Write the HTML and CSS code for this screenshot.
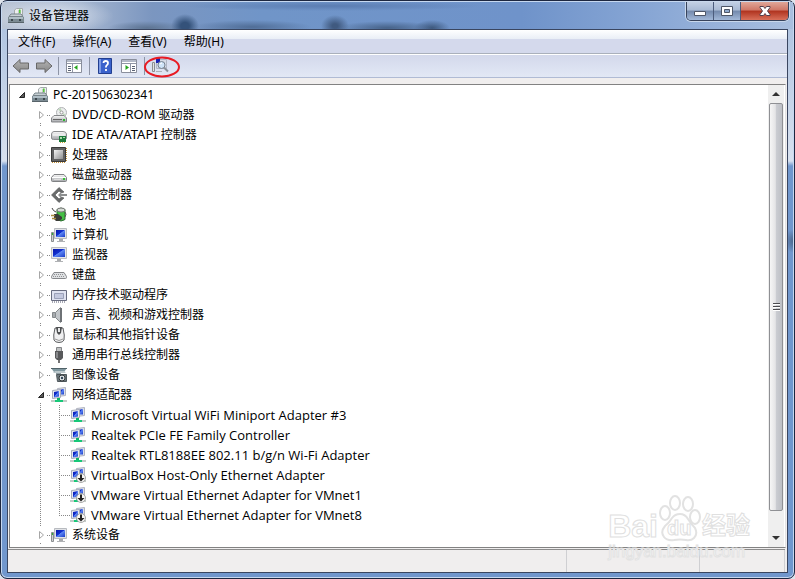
FILE: index.html
```
<!DOCTYPE html>
<html lang="zh-CN">
<head>
  <meta charset="UTF-8">
  <title>设备管理器</title>
  <link rel="stylesheet" href="styles.css">
</head>
<body>
<svg class="defs" aria-hidden="true">
  <defs>
    <linearGradient id="blue" x1="0" y1="0" x2="1" y2="1">
      <stop offset="0" stop-color="#0818a8"/><stop offset=".45" stop-color="#1230d0"/><stop offset=".5" stop-color="#5d86f4"/><stop offset="1" stop-color="#1a3cc8"/>
    </linearGradient>
    <linearGradient id="metal" x1="0" y1="0" x2="0" y2="1">
      <stop offset="0" stop-color="#fafafa"/><stop offset="1" stop-color="#a4a6aa"/>
    </linearGradient>
    <linearGradient id="arrow" x1="0" y1="0" x2="0" y2="1">
      <stop offset="0" stop-color="#b4b4b4"/><stop offset="1" stop-color="#868686"/>
    </linearGradient>
    <linearGradient id="chip" x1="0" y1="0" x2="1" y2="1">
      <stop offset="0" stop-color="#f4f4f4"/><stop offset="1" stop-color="#8e8f90"/>
    </linearGradient>
  </defs>
  <symbol id="i-pc" viewBox="0 0 16 16">
    <path d="M6.500 8V2l2-1.500h6V8z" fill="#eceeee" stroke="#a4aaac"/>
    <path d="M10 2h3v5h-3z" fill="#c2ccc4"/><path d="M11 1.500h1.500V5H11z" fill="#52cc38"/>
    <path d="M1 8.500l2-2.500h10l2 2.500z" fill="#c7d0d4" stroke="#78848a"/>
    <path d="M0 9h16v6H0z" fill="#7c8b93"/><path d="M1 9h14v2H1z" fill="#b0bec6"/>
    <path d="M3 11h2v2H3zM11 11h2v2h-2z" fill="#3c474d"/><path d="M0 14.500h16" stroke="#58646a"/>
  </symbol>
  <symbol id="i-dvd" viewBox="0 0 16 16">
    <circle cx="10.500" cy="5.500" r="5" fill="#eceeee" stroke="#b0b2b4"/>
    <path d="M10.500 5.500L7 2.500l3-1.500zM10.500 5.500l4 2-1 2z" fill="#bcd8b8"/>
    <circle cx="10.500" cy="5.500" r="1.500" fill="#fff" stroke="#999"/>
    <path d="M.500 11L3 8.500h10l2.500 2.500v4H.500z" fill="url(#metal)" stroke="#85878a"/>
    <path d="M2 12.500h9" stroke="#666"/><path d="M12 12h2v2h-2z" fill="#2db82d"/>
  </symbol>
  <symbol id="i-ide" viewBox="0 0 16 16">
    <path d="M.500 7Q1 4.500 3 4.500h9q3 0 3.500 2.500v4q0 1.500-2 1.500H2.500q-2 0-2-1.500z" fill="url(#metal)" stroke="#8a8c8e"/>
    <path d="M2 8h12" stroke="#fff"/>
    <path d="M8 9h7v6H8z" fill="#1d7a3c"/><path d="M9 10h2v2H9zM12 10h2v1h-2z" fill="#a8dca8"/>
    <path d="M9 15.500h6" stroke="#c8a43c" stroke-dasharray="1 1"/>
  </symbol>
  <symbol id="i-cpu" viewBox="0 0 16 16">
    <path d="M1 15.500h14M15.500 1v14" stroke="#c09038" stroke-dasharray="1 1"/>
    <path d="M.500.500h14v14H.500z" fill="#606162" stroke="#3a3a3a"/>
    <path d="M3 3h9v9H3z" fill="url(#chip)"/>
  </symbol>
  <symbol id="i-disk" viewBox="0 0 16 16">
    <path d="M.500 10.500L3 7.500h10l2.500 3v3q0 1-1 1h-13q-1 0-1-1z" fill="url(#metal)" stroke="#808284"/>
    <path d="M1 10.500h14" stroke="#fff"/><path d="M3 12.500h7" stroke="#ddd"/><path d="M12 11h2v2h-2z" fill="#35c035"/>
  </symbol>
  <symbol id="i-storage" viewBox="0 0 16 16">
    <path d="M8 .500l5 4.500-2.500 1L8 4 4 8l4 4 2.500-2 2.500 1-5 4.500L.500 8z" fill="#6a6c6d" stroke="#4e5051" stroke-width=".6"/>
    <path d="M7 8l3-3v2h6v2h-6v2z" fill="#8d8f90"/>
  </symbol>
  <symbol id="i-battery" viewBox="0 0 16 16">
    <path d="M6 2.500q4-3 8 0v10q-4 3-8 0z" fill="#44c044" stroke="#2c6a30"/>
    <ellipse cx="10" cy="3" rx="4" ry="2" fill="#d6dcd6" stroke="#777"/>
    <path d="M14 5q2 2 0 5" fill="none" stroke="#555"/>
    <path d="M3 7h4l4 3v2l-3 2H5L3 12z" fill="#3b3c38"/>
    <path d="M0 8.500h4M1 11.500h4" stroke="#a98a42" stroke-width="1.400"/>
    <path d="M1 1q1 3 4 4" fill="none" stroke="#444"/>
  </symbol>
  <symbol id="i-monitor" viewBox="0 0 16 16">
    <path d="M.500.500h15v11H.500z" fill="#e4e6ea" stroke="#bcbec2"/>
    <path d="M2 2h12v8H2z" fill="url(#blue)"/>
    <path d="M6 12h4v2H6z" fill="#a8aaad"/><path d="M4 14.500h8" stroke="#b0b2b5"/>
  </symbol>
  <symbol id="i-computer" viewBox="0 0 16 16">
    <path d="M.500 5.500h2v9h-2z" fill="#d0d2d4" stroke="#8b8e90"/><path d="M1 6h1v2H1z" fill="#2fb22f"/>
    <path d="M3.500 1.500h12v10h-12z" fill="#e0e2e6" stroke="#b8bbc0"/>
    <path d="M5 3h9v7H5z" fill="url(#blue)"/>
    <path d="M8 12h4v2H8z" fill="#a8aaad"/><path d="M6 14.500h8" stroke="#b0b2b5"/>
  </symbol>
  <symbol id="i-keyboard" viewBox="0 0 16 16">
    <path d="M.500 9.500L3 5.500h10l2.500 4v1q0 1-1 1h-13q-1 0-1-1z" fill="#dfe1e3" stroke="#85878a"/>
    <path d="M3 7.500h10M2 9.500h12" stroke="#909295" stroke-dasharray="1 1"/>
  </symbol>
  <symbol id="i-memory" viewBox="0 0 16 16">
    <path d="M.500 3.500h15v10H.500z" fill="#dfe2f0" stroke="#686c80"/>
    <path d="M3.500 6.500h9v5h-9z" fill="#c3c8de" stroke="#9aa0b8"/>
    <path d="M1 15h14" stroke="#50556c" stroke-dasharray="1 1"/>
  </symbol>
  <symbol id="i-sound" viewBox="0 0 16 16">
    <path d="M1.500 5.500h3v5h-3z" fill="#a6aaae" stroke="#85898c"/>
    <path d="M4.500 5.500L9.500.500v15l-5-5z" fill="#c2c6ca" stroke="#85898c"/><path d="M10 1v14" stroke="#6e7276" stroke-width="2"/>
  </symbol>
  <symbol id="i-mouse" viewBox="0 0 16 16">
    <path d="M4 1q-2 8-1 12 1 2.500 5 2.500t5-2.500q1-4-1-12z" fill="#f0f0f1" stroke="#5c5e60"/>
    <path d="M5 0h6l-1 6-2 2-2-2z" fill="#4d4f51"/><path d="M7 1h2v4H7z" fill="#e8e9ea"/>
    <path d="M4 12q4 3 8 0" fill="none" stroke="#999"/>
  </symbol>
  <symbol id="i-usb" viewBox="0 0 16 16">
    <path d="M5.500.500h5v5h-5z" fill="#c0c2c3" stroke="#838587"/>
    <path d="M4 4h8v7l-2 2H6l-2-2z" fill="#58595b"/><path d="M5 5h2v6H5z" fill="#88898c"/><path d="M8 13v3" stroke="#444" stroke-width="1.500"/>
  </symbol>
  <symbol id="i-imaging" viewBox="0 0 16 16">
    <path d="M0 1h16l-3 4H3z" fill="#8098a0"/><path d="M0 1.500h16" stroke="#506268"/><path d="M4 4h9l2 2H2z" fill="#bcc8cc"/>
    <path d="M5.500 7.500h10v7h-9z" fill="#6b767b" stroke="#4f585c"/>
    <circle cx="11" cy="11" r="3" fill="#e0e6e8" stroke="#35393b"/><circle cx="11" cy="11" r="1.200" fill="#345"/><path d="M5 6.500h5" stroke="#8d9ba0"/>
  </symbol>
  <symbol id="i-net" viewBox="0 0 16 16">
    <path d="M6.500 1.500l8-1v8l-8 1z" fill="#dde0ea" stroke="#b0b4c0"/><path d="M8 3l5-1v5.500H8z" fill="url(#blue)"/>
    <path d="M1.500 3.500l8-1v8l-8 1z" fill="#e6e8f0" stroke="#a6abb8"/><path d="M3 5l5-1v5.500l-5 1z" fill="url(#blue)"/>
    <path d="M6 11h3v3H6z" fill="#0fb468"/><path d="M0 14h16" stroke="#c4ccc8" stroke-width="2"/><path d="M4 14h8" stroke="#17c878" stroke-width="2"/>
  </symbol>
  <symbol id="i-netoff" viewBox="0 0 16 16">
    <use href="#i-net"/>
    <circle cx="11" cy="11" r="4.500" fill="#f4f4f4" stroke="#a9a9a9"/>
    <path d="M10 7.500h2V11h2.500L11 14.500 7.500 11H10z" fill="#242424"/>
  </symbol>
  <symbol id="i-open" viewBox="0 0 8 8"><path d="M6.500 1.500v5h-5z" fill="#595959" stroke="#262626"/></symbol>
  <symbol id="i-closed" viewBox="0 0 8 8"><path d="M2.500.500v7l4-3.500z" fill="#fff" stroke="#a6a6a6"/></symbol>
</svg>

<div class="window">
  <header class="titlebar">
    <svg class="icon"><use href="#i-pc"/></svg>
    <h1>设备管理器</h1>
    <div class="caption">
      <button aria-label="最小化"><svg width="14" height="14"><path d="M1.500 7.500h11v4h-11z" fill="#fff" stroke="#4e5667"/></svg></button>
      <button aria-label="最大化"><svg width="14" height="14"><path d="M1.500 2.500h11v9h-11z" fill="#fff" stroke="#4e5667"/><path d="M4.500 5.500h5v3h-5z" fill="#8fa9cd" stroke="#4e5667"/></svg></button>
      <button class="close" aria-label="关闭"><svg width="14" height="14"><path d="M2 2.500h3.500L7 4.500l1.500-2H12v1L9.500 7l2.500 3.500v1H8.500L7 9.500l-1.500 2H2v-1L4.500 7 2 3.500z" fill="#fff" stroke="#53404e"/></svg></button>
    </div>
  </header>

  <main class="client">
    <nav class="menu">
      <button>文件(F)</button>
      <button>操作(A)</button>
      <button>查看(V)</button>
      <button>帮助(H)</button>
    </nav>

    <div class="toolbar">
      <button aria-label="后退"><svg width="18" height="16"><path d="M1 8l7-6.500V5h8.500v6H8v3.500z" fill="url(#arrow)" stroke="#686868"/></svg></button>
      <button aria-label="前进"><svg width="18" height="16"><path d="M17 8l-7-6.500V5H1.500v6H10v3.500z" fill="url(#arrow)" stroke="#686868"/></svg></button>
      <span class="sep"></span>
      <button class="wide" aria-label="显示/隐藏控制台树"><svg width="16" height="14"><path d="M.500.500h15v13H.500z" fill="#fff" stroke="#8a8f9c"/><path d="M1 1h14v2H1z" fill="#b4bac8"/><path d="M1 4.500h14M6.500 5v8" stroke="#9096a6"/><path d="M2 7.500h3M2 9.500h3M2 11.500h3" stroke="#5a6274"/><path d="M11.500 6v5L8 8.500z" fill="#26a51e"/></svg></button>
      <span class="sep"></span>
      <button class="wide" aria-label="帮助"><svg width="14" height="16"><path d="M.500.500h13v15H.500z" fill="#3a62cc" stroke="#223f90"/><path d="M1 1h2v14H1z" fill="#7d9be6"/><path d="M5.500 5Q5.500 3 7.700 3T10 5q0 1.500-1.200 2.200-.9.600-.9 2.300M8 11v2" fill="none" stroke="#fff" stroke-width="1.800"/></svg></button>
      <button class="wide" aria-label="操作窗格"><svg width="16" height="14"><path d="M.500.500h15v13H.500z" fill="#fff" stroke="#8a8f9c"/><path d="M1 1h14v2H1z" fill="#b4bac8"/><path d="M1 4.500h14M9.500 5v8" stroke="#9096a6"/><path d="M11 7.500h3M11 9.500h3M11 11.500h3" stroke="#5a6274"/><path d="M4.500 6v5L8 8.500z" fill="#26a51e"/></svg></button>
      <span class="sep"></span>
      <button class="scan" aria-label="扫描检测硬件改动">
        <svg width="18" height="16"><path d="M1.500 4.500h2v9h-2z" fill="#e4e4e4" stroke="#8b8e90"/><path d="M5.500 1.500h10v9h-10z" fill="#d5dae6" stroke="#b0b6c4"/><path d="M5 0h4v5H5z" fill="#1722b4"/><circle cx="10.500" cy="7" r="3.500" fill="#cfe4f8" stroke="#77818f"/><path d="M9 6l2-1" stroke="#fff"/><path d="M13 9.500l4 4" stroke="#8a8f98" stroke-width="2"/><path d="M5 13.500h6" stroke="#adb1b8"/></svg>
        <svg class="mark" width="38" height="22"><ellipse cx="19" cy="11" rx="17" ry="9.500" fill="none" stroke="#e81c24" stroke-width="2"/></svg>
      </button>
    </div>

    <div class="pane">
      <div class="view">
        <div class="row root"><button aria-label="折叠"><svg><use href="#i-open"/></svg></button><svg class="icon"><use href="#i-pc"/></svg><span>PC-201506302341</span></div>
        <ul class="tree">
          <li><div class="row"><button aria-label="展开"><svg><use href="#i-closed"/></svg></button><svg class="icon"><use href="#i-dvd"/></svg><span><span class="latin">DVD/CD-ROM</span> 驱动器</span></div></li>
          <li><div class="row"><button aria-label="展开"><svg><use href="#i-closed"/></svg></button><svg class="icon"><use href="#i-ide"/></svg><span><span class="latin">IDE ATA/ATAPI</span> 控制器</span></div></li>
          <li><div class="row"><button aria-label="展开"><svg><use href="#i-closed"/></svg></button><svg class="icon"><use href="#i-cpu"/></svg><span>处理器</span></div></li>
          <li><div class="row"><button aria-label="展开"><svg><use href="#i-closed"/></svg></button><svg class="icon"><use href="#i-disk"/></svg><span>磁盘驱动器</span></div></li>
          <li><div class="row"><button aria-label="展开"><svg><use href="#i-closed"/></svg></button><svg class="icon"><use href="#i-storage"/></svg><span>存储控制器</span></div></li>
          <li><div class="row"><button aria-label="展开"><svg><use href="#i-closed"/></svg></button><svg class="icon"><use href="#i-battery"/></svg><span>电池</span></div></li>
          <li><div class="row"><button aria-label="展开"><svg><use href="#i-closed"/></svg></button><svg class="icon"><use href="#i-computer"/></svg><span>计算机</span></div></li>
          <li><div class="row"><button aria-label="展开"><svg><use href="#i-closed"/></svg></button><svg class="icon"><use href="#i-monitor"/></svg><span>监视器</span></div></li>
          <li><div class="row"><button aria-label="展开"><svg><use href="#i-closed"/></svg></button><svg class="icon"><use href="#i-keyboard"/></svg><span>键盘</span></div></li>
          <li><div class="row"><button aria-label="展开"><svg><use href="#i-closed"/></svg></button><svg class="icon"><use href="#i-memory"/></svg><span>内存技术驱动程序</span></div></li>
          <li><div class="row"><button aria-label="展开"><svg><use href="#i-closed"/></svg></button><svg class="icon"><use href="#i-sound"/></svg><span>声音、视频和游戏控制器</span></div></li>
          <li><div class="row"><button aria-label="展开"><svg><use href="#i-closed"/></svg></button><svg class="icon"><use href="#i-mouse"/></svg><span>鼠标和其他指针设备</span></div></li>
          <li><div class="row"><button aria-label="展开"><svg><use href="#i-closed"/></svg></button><svg class="icon"><use href="#i-usb"/></svg><span>通用串行总线控制器</span></div></li>
          <li><div class="row"><button aria-label="展开"><svg><use href="#i-closed"/></svg></button><svg class="icon"><use href="#i-imaging"/></svg><span>图像设备</span></div></li>
          <li><div class="row"><button aria-label="折叠"><svg><use href="#i-open"/></svg></button><svg class="icon"><use href="#i-net"/></svg><span>网络适配器</span></div>
            <ul class="leaves">
              <li class="row"><svg class="icon"><use href="#i-net"/></svg><span>Microsoft Virtual WiFi Miniport Adapter #3</span></li>
              <li class="row"><svg class="icon"><use href="#i-net"/></svg><span>Realtek PCIe FE Family Controller</span></li>
              <li class="row"><svg class="icon"><use href="#i-net"/></svg><span>Realtek RTL8188EE 802.11 b/g/n Wi-Fi Adapter</span></li>
              <li class="row"><svg class="icon"><use href="#i-netoff"/></svg><span>VirtualBox Host-Only Ethernet Adapter</span></li>
              <li class="row"><svg class="icon"><use href="#i-netoff"/></svg><span>VMware Virtual Ethernet Adapter for VMnet1</span></li>
              <li class="row"><svg class="icon"><use href="#i-netoff"/></svg><span>VMware Virtual Ethernet Adapter for VMnet8</span></li>
            </ul>
          </li>
          <li><div class="row"><button aria-label="展开"><svg><use href="#i-closed"/></svg></button><svg class="icon"><use href="#i-computer"/></svg><span>系统设备</span></div></li>
        </ul>
      </div>
      <div class="scrollbar">
        <button aria-label="向上"><svg width="8" height="4"><path d="M0 4l4-4 4 4z" fill="#333"/></svg></button>
        <div class="thumb"><i></i><i></i><i></i></div>
        <button aria-label="向下"><svg width="8" height="4"><path d="M0 0l4 4 4-4z" fill="#333"/></svg></button>
      </div>
    </div>

    <footer class="status"><span></span><span></span><span></span></footer>
  </main>

  <div class="watermark">
    <div class="logo">
      <b>Bai</b>
      <span class="paw">
        <svg width="44" height="48"><g fill="#fff" stroke="#e2e2e2" stroke-width="2"><ellipse cx="7" cy="19" rx="5" ry="7"/><ellipse cx="17" cy="9" rx="5" ry="7"/><ellipse cx="30" cy="10" rx="5" ry="7"/><ellipse cx="37" cy="23" rx="5" ry="7"/><path d="M22 20q5 0 8 5t7 9q3 6-1 10-3 3-8 2-6-1-12 0-7 1-10-3-4-5 1-11 4-3 7-8 3-4 8-4z"/></g></svg>
        <b>du</b>
      </span>
      <b class="cn">经验</b>
    </div>
    <div class="site">jingyan.baidu.com</div>
  </div>
</div>
</body>
</html>
```
FILE: styles.css
```
*{
  box-sizing: border-box;
}
body{
  margin: 0;
  background-color: #dfe4ec;
  color: #000;
  font: 12px/20px "Noto Sans", "Noto Sans CJK SC", sans-serif;
}
button{
  margin: 0;
  padding: 0;
  border: 0;
  background: none;
  color: inherit;
  font: inherit;
}
svg{
  display: block;
  flex: none;
}
ul{
  list-style: none;
  margin: 0;
  padding: 0;
}
.defs{
  position: absolute;
  width: 0;
  height: 0;
}
.icon{
  width: 16px;
  height: 16px;
}

/* window frame */
.window{
  position: relative;
  display: flex;
  flex-direction: column;
  height: 100vh;
  padding: 0 6px 5px;
  border: 1px solid #1d2740;
  border-radius: 7px;
  box-shadow: inset 0 0 0 1px #c6d8f0;
  background:
    radial-gradient(ellipse 10px 12px at 100% 240px, #4a6488, transparent),
    linear-gradient(#a9bfde 0, #d8e1ef 160px, #7197cd 165px, #7197cd 100%);
}
.titlebar{
  display: flex;
  align-items: center;
  height: 27px;
  margin: 1px -5px 0;
  padding: 0 4px 0 6px;
  background:
    radial-gradient(ellipse 60px 18px at 52px 14px, rgba(235,240,248,.8), transparent),
    radial-gradient(ellipse 14px 12px at 183px 24px, #34527a 30%, transparent),
    radial-gradient(ellipse 14px 11px at 333px 24px, #405a80 20%, transparent),
    radial-gradient(ellipse 60px 7px at 250px 25px, #506d96, transparent),
    radial-gradient(ellipse 50px 7px at 385px 26px, #466288, transparent),
    radial-gradient(ellipse 18px 8px at 430px 26px, #3c577c, transparent),
    radial-gradient(ellipse 40px 7px at 145px 26px, #5d7492, transparent),
    radial-gradient(ellipse 150px 5px at 330px 4px, #5b7db2, transparent),
    linear-gradient(90deg, #bcc6d6 0, #a4b5cf 80px, #7b96c0 150px, #7095c8 260px, #6f93ca 520px, #86a5d4 640px, #a9bfdf 100%);
}
h1{
  flex: 1;
  margin: 0 0 0 5px;
  font-size: 12px;
  font-weight: normal;
}
.caption{
  display: flex;
  align-self: flex-start;
  border: 1px solid #37435c;
  border-top: 0;
  border-radius: 0 0 5px 5px;
  box-shadow: 0 0 0 1px #c9d8ec;
  overflow: hidden;
}
.caption button{
  display: flex;
  align-items: center;
  justify-content: center;
  width: 27px;
  height: 18px;
  border-right: 1px solid #4c5c7c;
  background: linear-gradient(#c3d0e4 0, #a9bad4 45%, #7389ac 50%, #a2b8d8 100%);
}
.caption .close{
  width: 47px;
  border: 0;
  background: linear-gradient(#e0a799 0, #cf7767 45%, #b0331f 50%, #d8705a 100%);
}

.client{
  display: flex;
  flex: 1;
  flex-direction: column;
  min-height: 0;
  border: 1px solid #3a4660;
  background-color: #f0eeee;
}
.menu{
  display: flex;
  gap: 17px;
  height: 24px;
  padding: 1px 10px;
  border-bottom: 1px solid #aab0bb;
  background: linear-gradient(#fff 0, #e9eef6 9px, #d4d9ec 9px, #d4d9ec 100%);
}
.toolbar{
  display: flex;
  align-items: center;
  height: 24px;
  padding: 0 1px;
  border-top: 1px solid #fff;
  border-bottom: 1px solid #b0bbd4;
  background: linear-gradient(#d3d8eb, #e2e8f5);
}
.toolbar button{
  display: flex;
  justify-content: center;
  width: 23px;
}
.toolbar .wide{
  width: 24px;
}
.sep{
  width: 1px;
  height: 18px;
  margin: 0 3px;
  background-color: #8e95a6;
}
.toolbar .scan{
  position: relative;
  width: 24px;
}
.mark{
  position: absolute;
  left: -5px;
  top: -2px;
}

/* device tree */
.pane{
  display: flex;
  flex: 1;
  min-height: 0;
  margin: 6px 1px 0;
  border: 1px solid #828282;
  border-right-color: #e3e3e3;
  background-color: #fff;
}
.view{
  flex: 1;
  overflow: hidden;
}
.row{
  display: flex;
  align-items: center;
  height: 20px;
  white-space: nowrap;
}
.row > span{
  margin-left: 5px;
}
.row button{
  width: 8px;
  height: 16px;
  margin-right: 6px;
  padding: 4px 0;
  background-color: #fff;
}
.row button svg{
  width: 8px;
  height: 8px;
}
.root{
  padding-left: 8px;
}
.tree{
  background: repeating-linear-gradient(#888 0 1px, transparent 1px 2px) 30px 0 / 1px 100% no-repeat;
}
.tree div.row{
  padding-left: 27px;
  background: repeating-linear-gradient(90deg, #888 0 1px, transparent 1px 2px) 37px 10px / 4px 1px no-repeat;
}
.leaves{
  background: repeating-linear-gradient(#888 0 1px, transparent 1px 2px) 49px 0 / 1px calc(100% - 9px) no-repeat;
  font-family: "Open Sans", "Noto Sans", sans-serif;
}
.leaves .row{
  padding-left: 60px;
  background: repeating-linear-gradient(90deg, #888 0 1px, transparent 1px 2px) 49px 10px / 11px 1px no-repeat;
}
.leaves, .latin{
  font-size: 13px;
}
.latin{
  line-height: 16px;
}

.scrollbar{
  display: flex;
  flex-direction: column;
  width: 17px;
  border-right: 1px solid #fff;
  background-color: #efefef;
}
.scrollbar button{
  display: flex;
  align-items: center;
  justify-content: center;
  height: 18px;
}
.thumb{
  display: flex;
  flex: 1;
  flex-direction: column;
  align-items: center;
  justify-content: center;
  gap: 1px;
  margin: 0 1px 18px;
  border: 1px solid #8f9094;
  border-radius: 2px;
  background: linear-gradient(90deg, #f6f6f6, #e4e4e6 45%, #cbcdd2 50%, #bdbfc5);
}
.thumb i{
  width: 7px;
  height: 2px;
  border-top: 1px solid #4c4c50;
  background-color: #fff;
}

.status{
  display: flex;
  height: 23px;
  margin: 1px 2px 0 0;
  border-top: 1px solid #8c8c8c;
}
.status span{
  width: 133px;
  border-right: 1px solid #cfcfd2;
}
.status span:first-child{
  flex: 1;
}
.status span:last-child{
  width: 85px;
}

/* watermark over the lower right corner */
.watermark{
  position: absolute;
  right: 44px;
  bottom: 16px;
  color: #fff;
  font-family: "Liberation Sans", "Noto Sans CJK SC", sans-serif;
  pointer-events: none;
}
.logo{
  display: flex;
  align-items: flex-end;
  height: 50px;
  font-size: 32px;
  line-height: 32px;
  -webkit-text-stroke: 1px #e0e0e0;
}
.paw{
  position: relative;
}
.paw b{
  position: absolute;
  left: 9px;
  bottom: 4px;
  font-size: 20px;
  line-height: 20px;
}
.cn{
  font-size: 24px;
}
.site{
  font-size: 17px;
  line-height: 20px;
  -webkit-text-stroke: 1px #e2e2e2;
}
```
